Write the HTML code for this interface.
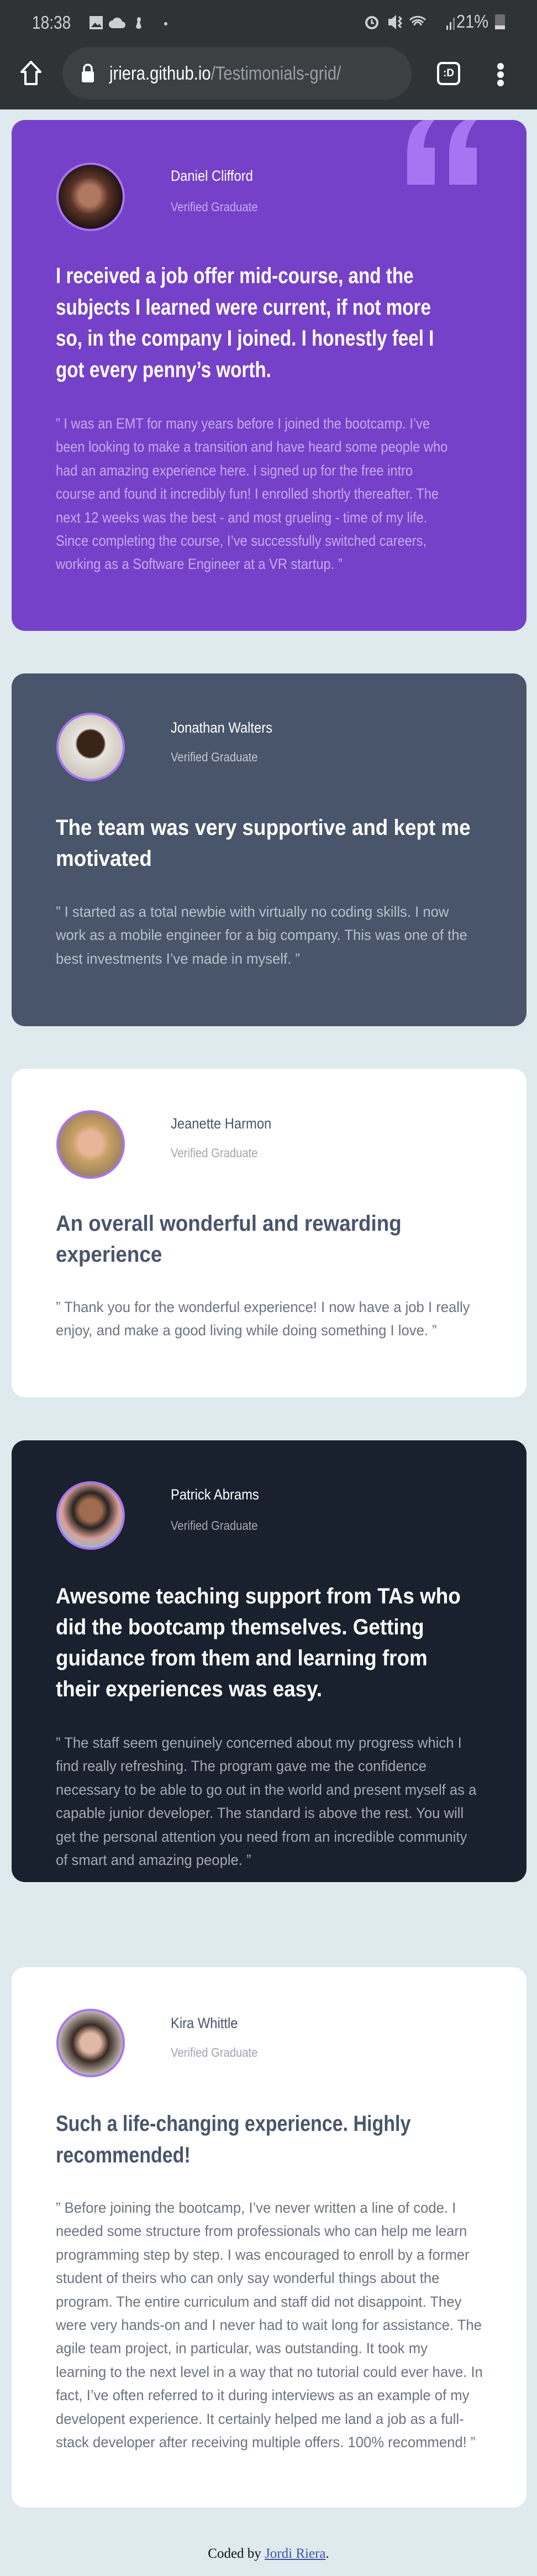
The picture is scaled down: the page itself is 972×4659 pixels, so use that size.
<!DOCTYPE html>
<html><head><meta charset="utf-8">
<style>
*{margin:0;padding:0;box-sizing:border-box}
html,body{width:972px;height:4659px;overflow:hidden}
body{background:#dfeaee;font-family:"Liberation Sans",sans-serif;position:relative}
.bar{position:absolute;left:0;top:0;width:972px;height:198px;background:#303336}
.card{position:absolute;left:21px;width:932px;border-radius:24px;overflow:hidden}
.av{position:absolute;left:81px;width:124px;height:124px;border-radius:50%;border:4px solid #a775f1}
.nm{position:absolute;left:288px;font-size:27px;white-space:nowrap;transform:scaleX(.88);transform-origin:0 50%;line-height:30px}
.vg{position:absolute;left:288px;font-size:23px;white-space:nowrap;transform:scaleX(.88);transform-origin:0 50%;line-height:26px}
.blk{position:absolute;left:80px;white-space:nowrap}
.blk div{transform-origin:0 50%}
.h{font-weight:bold;font-size:40px}
.h div{transform:scaleX(.92)}
.h.n div{transform:scaleX(.83)}
.h.k div{transform:scaleX(.85)}
.b{font-size:27px;line-height:42.4px}
.b div{transform:scaleX(.95)}
.b.n div{transform:scaleX(.875)}
</style></head><body>
<div class="bar">
  <div style="position:absolute;left:58px;top:22px;font-size:33px;color:#cfcfd1;transform:scaleX(.85);transform-origin:0 0">18:38</div>
  <svg style="position:absolute;left:160px;top:27px" width="150" height="30" viewBox="0 0 150 30">
    <rect x="2" y="2" width="24" height="24" fill="#cfcfd1"/><path d="M5 22l7-8 5 5 3-3 4 6z" fill="#303336"/>
    <path d="M44 24a7 7 0 0 1 0-14a9 9 0 0 1 17 2a6 6 0 0 1 0 12z" fill="#cfcfd1"/>
    <path d="M92 4c-4 0-5 5-3 8l-3 10c2 4 8 4 10 0l-3-9c3-3 2-9-1-9z" fill="#cfcfd1"/>
    <circle cx="140" cy="16" r="3" fill="#cfcfd1"/>
  </svg>
  <svg style="position:absolute;left:658px;top:22px" width="170" height="36" viewBox="0 0 170 36">
    <circle cx="15" cy="19" r="10" fill="none" stroke="#cfcfd1" stroke-width="4"/><path d="M15 13v7h4" stroke="#cfcfd1" stroke-width="3" fill="none"/>
    <path d="M45 12h6l8-7v26l-8-7h-6z" fill="#cfcfd1"/><path d="M64 8l4 4-4 4 4 4-4 4 4 4" stroke="#cfcfd1" stroke-width="3" fill="none"/>
    <path d="M84 14a20 20 0 0 1 28 0M88 19a13 13 0 0 1 20 0M92 24a6 6 0 0 1 12 0" stroke="#cfcfd1" stroke-width="3" fill="none"/>
    <rect x="150" y="24" width="3" height="8" fill="#cfcfd1"/><rect x="156" y="18" width="3" height="14" fill="#cfcfd1"/><rect x="162" y="10" width="3" height="22" fill="#888"/>
  </svg>
  <div style="position:absolute;left:826px;top:20px;font-size:33px;color:#cfcfd1;transform:scaleX(.88);transform-origin:0 0">21%</div>
  <div style="position:absolute;left:896px;top:26px;width:18px;height:27px;background:#6d6d70;border-radius:2px"></div>
  <div style="position:absolute;left:896px;top:46px;width:18px;height:7px;background:#d6d6d8"></div>
  <svg style="position:absolute;left:34px;top:108px" width="44" height="48" viewBox="0 0 44 48"><path d="M22 4L5 22h7v22h20V22h7z" fill="none" stroke="#fff" stroke-width="4" stroke-linejoin="round"/></svg>
  <div style="position:absolute;left:113px;top:85px;width:632px;height:95px;border-radius:48px;background:#3c4043"></div>
  <svg style="position:absolute;left:146px;top:114px" width="26" height="36" viewBox="0 0 26 36"><path d="M6 15v-5a7 7 0 0 1 14 0v5" fill="none" stroke="#fff" stroke-width="3.5"/><rect x="2" y="15" width="22" height="20" rx="3" fill="#fff"/></svg>
  <div style="position:absolute;left:198px;top:114px;font-size:34px;white-space:nowrap;transform:scaleX(.86);transform-origin:0 0;color:#fff">jriera.github.io<span style="color:#9aa0a6">/Testimonials-grid/</span></div>
  <div style="position:absolute;left:791px;top:112px;width:42px;height:42px;border:4px solid #fff;border-radius:9px;color:#fff;font-weight:bold;font-size:19px;text-align:center;line-height:34px">:D</div>
  <div style="position:absolute;left:900px;top:114px;width:12px;height:12px;border-radius:50%;background:#fff"></div>
  <div style="position:absolute;left:900px;top:129px;width:12px;height:12px;border-radius:50%;background:#fff"></div>
  <div style="position:absolute;left:900px;top:144px;width:12px;height:12px;border-radius:50%;background:#fff"></div>
</div>

<!-- Card 1 -->
<div class="card" style="top:217px;height:924px;background:#7541c8">
  <svg style="position:absolute;left:716px;top:0" width="126" height="117" viewBox="0 0 126 117"><path d="M0 117V62C0 30 10 8 30 0h20C38 12 31 30 30 50h20v67zM76 117V62C76 30 86 8 106 0h20c-12 12-19 30-20 50h20v67z" fill="#a775f1"/></svg>
  <div class="av" style="top:77px;background:radial-gradient(circle at 48% 48%,#b07860 0 22%,#5a3326 40%,#1e1412 70%)"></div>
  <div class="nm" style="top:86px;color:#fff">Daniel Clifford</div>
  <div class="vg" style="top:144px;color:#c6aaf0">Verified Graduate</div>
  <div class="blk h n" style="top:254px;line-height:56.5px;color:#fff">
    <div>I received a job offer mid-course, and the</div>
    <div>subjects I learned were current, if not more</div>
    <div>so, in the company I joined. I honestly feel I</div>
    <div>got every penny’s worth.</div>
  </div>
  <div class="blk b n" style="top:528px;color:#c5aaee">
    <div>” I was an EMT for many years before I joined the bootcamp. I’ve</div>
    <div>been looking to make a transition and have heard some people who</div>
    <div>had an amazing experience here. I signed up for the free intro</div>
    <div>course and found it incredibly fun! I enrolled shortly thereafter. The</div>
    <div>next 12 weeks was the best - and most grueling - time of my life.</div>
    <div>Since completing the course, I’ve successfully switched careers,</div>
    <div>working as a Software Engineer at a VR startup. ”</div>
  </div>
</div>

<!-- Card 2 -->
<div class="card" style="top:1218px;height:638px;background:#48556a">
  <div class="av" style="top:71px;background:radial-gradient(circle at 50% 45%,#3a2418 0 28%,#e8e4df 32%,#cfc8c0 70%,#8a7c6c)"></div>
  <div class="nm" style="top:83px;color:#fff">Jonathan Walters</div>
  <div class="vg" style="top:138px;color:#c0c6cf">Verified Graduate</div>
  <div class="blk h" style="top:251px;line-height:56px;color:#fff">
    <div>The team was very supportive and kept me</div>
    <div>motivated</div>
  </div>
  <div class="blk b" style="top:410px;color:#b9c0cb">
    <div>” I started as a total newbie with virtually no coding skills. I now</div>
    <div>work as a mobile engineer for a big company. This was one of the</div>
    <div>best investments I’ve made in myself. ”</div>
  </div>
</div>

<!-- Card 3 -->
<div class="card" style="top:1933px;height:594px;background:#fff">
  <div class="av" style="top:75px;background:radial-gradient(circle at 50% 48%,#e8b49a 0 26%,#c8a064 40%,#a88a60 65%,#6c6650)"></div>
  <div class="nm" style="top:84px;color:#48556a">Jeanette Harmon</div>
  <div class="vg" style="top:139px;color:#a0a6b0">Verified Graduate</div>
  <div class="blk h" style="top:252px;line-height:56px;color:#48556a">
    <div>An overall wonderful and rewarding</div>
    <div>experience</div>
  </div>
  <div class="blk b" style="top:410px;color:#6b7380">
    <div>” Thank you for the wonderful experience! I now have a job I really</div>
    <div>enjoy, and make a good living while doing something I love. ”</div>
  </div>
</div>

<!-- Card 4 -->
<div class="card" style="top:2605px;height:799px;background:#19212e">
  <div class="av" style="top:74px;background:radial-gradient(circle at 50% 42%,#a06c50 0 22%,#2a2420 36%,#d9a098 58%,#9fb8c4 75%)"></div>
  <div class="nm" style="top:83px;color:#fff">Patrick Abrams</div>
  <div class="vg" style="top:141px;color:#a4a9b0">Verified Graduate</div>
  <div class="blk h" style="top:254px;line-height:56px;color:#fff">
    <div>Awesome teaching support from TAs who</div>
    <div>did the bootcamp themselves. Getting</div>
    <div>guidance from them and learning from</div>
    <div>their experiences was easy.</div>
  </div>
  <div class="blk b" style="top:526px;color:#a4a9b0">
    <div>” The staff seem genuinely concerned about my progress which I</div>
    <div>find really refreshing. The program gave me the confidence</div>
    <div>necessary to be able to go out in the world and present myself as a</div>
    <div>capable junior developer. The standard is above the rest. You will</div>
    <div>get the personal attention you need from an incredible community</div>
    <div>of smart and amazing people. ”</div>
  </div>
</div>

<!-- Card 5 -->
<div class="card" style="top:3558px;height:977px;background:#fff">
  <div class="av" style="top:75px;background:radial-gradient(circle at 50% 50%,#e0b8a4 0 22%,#3a2a24 40%,#c4bcb4 72%)"></div>
  <div class="nm" style="top:86px;color:#48556a">Kira Whittle</div>
  <div class="vg" style="top:141px;color:#a0a6b0">Verified Graduate</div>
  <div class="blk h k" style="top:255px;line-height:57px;color:#48556a">
    <div>Such a life-changing experience. Highly</div>
    <div>recommended!</div>
  </div>
  <div class="blk b" style="top:414px;color:#6b7380">
    <div>” Before joining the bootcamp, I’ve never written a line of code. I</div>
    <div>needed some structure from professionals who can help me learn</div>
    <div>programming step by step. I was encouraged to enroll by a former</div>
    <div>student of theirs who can only say wonderful things about the</div>
    <div>program. The entire curriculum and staff did not disappoint. They</div>
    <div>were very hands-on and I never had to wait long for assistance. The</div>
    <div>agile team project, in particular, was outstanding. It took my</div>
    <div>learning to the next level in a way that no tutorial could ever have. In</div>
    <div>fact, I’ve often referred to it during interviews as an example of my</div>
    <div>developent experience. It certainly helped me land a job as a full-</div>
    <div>stack developer after receiving multiple offers. 100% recommend! ”</div>
  </div>
</div>

<div style="position:absolute;left:0;top:4605px;width:972px;text-align:center;font-family:'Liberation Serif','DejaVu Serif',serif;font-size:25px;color:#111">Coded by <span style="color:#3e52a3;text-decoration:underline">Jordi Riera</span>.</div>
</body></html>
